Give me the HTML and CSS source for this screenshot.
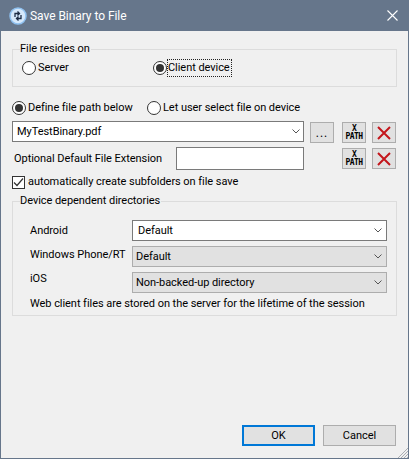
FILE: index.html
```html
<!DOCTYPE html>
<html lang="en">
<head>
  <meta charset="UTF-8">
  <meta name="viewport" content="width=device-width, initial-scale=1.0">
  <title>Save Binary to File</title>
  <link rel="stylesheet" href="styles.css">
</head>
<body>
  <div class="dialog">
    <div class="titlebar">
      <svg class="app-icon" width="18" height="18" viewBox="0 0 18 18">
        <circle cx="9" cy="9" r="8" fill="#d5e8fb" stroke="#8fc1f0" stroke-width="1.5"/>
        <path d="M6 10V6.500h4M8.500 4.500l2 2-2 2M12 8v3.500H8M9.500 13.500l-2-2 2-2" fill="none" stroke="#1d2c44" stroke-width="1.3"/>
      </svg>
      <span class="title">Save Binary to File</span>
      <svg class="close" width="11" height="11" viewBox="0 0 11 11">
        <path d="M.5.500l10 10M10.500.500l-10 10" stroke="#fff" stroke-width="1.1"/>
      </svg>
    </div>

    <div class="content">
      <fieldset class="group group-location">
        <legend>File resides on</legend>
        <div class="location-row">
          <div class="radio-item item-server"><span class="radio"></span>Server</div>
          <div class="radio-item"><span class="radio checked"></span><span class="focused">Client device</span></div>
        </div>
      </fieldset>

      <div class="path-mode">
        <div class="radio-item item-define"><span class="radio checked"></span>Define file path below</div>
        <div class="radio-item"><span class="radio"></span>Let user select file on device</div>
      </div>

      <div class="row row-path">
        <div class="field combo">
          <span>MyTestBinary.pdf</span>
          <svg class="chevron" width="8" height="5" viewBox="0 0 8 5"><path d="M.5.500L4 4 7.500.500" fill="none" stroke="#555"/></svg>
        </div>
        <div class="tool-btn dots">...</div>
        <div class="tool-btn xpath"><span>X</span><span>PATH</span></div>
        <div class="tool-btn del">
          <svg width="14" height="14" viewBox="0 0 14 14"><path d="M1 1l12 12M13 1L1 13" stroke="#c4161c" stroke-width="2"/></svg>
        </div>
      </div>

      <div class="row row-ext">
        <span class="ext-label">Optional Default File Extension</span>
        <div class="field ext-input"></div>
        <div class="tool-btn xpath"><span>X</span><span>PATH</span></div>
        <div class="tool-btn del">
          <svg width="14" height="14" viewBox="0 0 14 14"><path d="M1 1l12 12M13 1L1 13" stroke="#c4161c" stroke-width="2"/></svg>
        </div>
      </div>

      <div class="check-row">
        <span class="checkbox">
          <svg width="11" height="9" viewBox="0 0 11 9"><path d="M1 4.500l3 3 6-7" fill="none" stroke="#333" stroke-width="1.200"/></svg>
        </span>
        automatically create subfolders on file save
      </div>

      <fieldset class="group group-device">
        <legend>Device dependent directories</legend>
        <div class="device-body">
          <div class="device-row">
            <span class="device-label label-android">Android</span>
            <div class="select active">
              <span>Default</span>
              <svg class="chevron" width="8" height="5" viewBox="0 0 8 5"><path d="M.5.500L4 4 7.500.500" fill="none" stroke="#555"/></svg>
            </div>
          </div>
          <div class="device-row">
            <span class="device-label label-windows">Windows Phone/RT</span>
            <div class="select">
              <span>Default</span>
              <svg class="chevron" width="8" height="5" viewBox="0 0 8 5"><path d="M.5.500L4 4 7.500.500" fill="none" stroke="#555"/></svg>
            </div>
          </div>
          <div class="device-row">
            <span class="device-label label-ios">iOS</span>
            <div class="select">
              <span>Non-backed-up directory</span>
              <svg class="chevron" width="8" height="5" viewBox="0 0 8 5"><path d="M.5.500L4 4 7.500.500" fill="none" stroke="#555"/></svg>
            </div>
          </div>
          <p class="note">Web client files are stored on the server for the lifetime of the session</p>
        </div>
      </fieldset>

      <div class="actions">
        <button class="btn default">OK</button>
        <button class="btn">Cancel</button>
      </div>
      <svg class="grip" width="11" height="11" viewBox="0 0 11 11">
        <path d="M11 1L1 11M11 4L4 11M11 7L7 11M11 10l-1 1" stroke="#a9adb2" stroke-width="1"/>
      </svg>
    </div>
  </div>
</body>
</html>
```

FILE: styles.css
```css
* {
  box-sizing: border-box;
}

body {
  margin: 0;
  font-family: Roboto, "Noto Sans", sans-serif;
  font-size: 11px;
  line-height: 16px;
  letter-spacing: -0.05px;
  color: #000;
  background-color: #f0f0f0;
  white-space: nowrap;
}

.dialog {
  width: 409px;
  height: 459px;
  display: flex;
  flex-direction: column;
  border: 1px solid #66768b;
  border-top: 0;
}

.titlebar {
  height: 31px;
  flex: none;
  margin: 0 -1px;
  padding: 0 11px 0 9px;
  display: flex;
  align-items: center;
  background-color: #66768b;
  color: white;
}

.app-icon {
  margin-right: 3px;
}

.title {
  flex: 1;
  font-size: 12px;
}

.content {
  flex: 1;
  position: relative;
  padding: 10px 11px 0 11px;
  display: flex;
  flex-direction: column;
}

.group {
  margin: 0;
  padding: 0;
  min-width: 0;
  border: 1px solid #dcdcdc;
}

.group legend {
  margin-left: 7px;
  padding: 0 1px 0 0;
}

.group-location {
  height: 46px;
}

.location-row {
  display: flex;
  padding: 3px 0 0 9px;
}

.radio-item {
  display: flex;
  align-items: center;
}

.item-server {
  width: 131px;
}

.item-define {
  width: 135px;
}

.radio {
  width: 14px;
  height: 14px;
  margin-right: 2px;
  flex: none;
  border: 1px solid #333;
  border-radius: 50%;
  background-color: white;
  display: flex;
  align-items: center;
  justify-content: center;
}

.radio.checked::after {
  content: "";
  width: 8px;
  height: 8px;
  border-radius: 50%;
  background-color: #333;
}

.focused {
  margin-left: -1px;
  padding: 0 1px 0 0;
  outline: 1px dotted #222;
}

.path-mode {
  display: flex;
  margin-top: 13px;
}

.row {
  display: flex;
  align-items: center;
}

.row-path {
  margin-top: 5px;
  align-items: flex-start;
}

.row-ext {
  margin-top: 4px;
}

.field {
  background-color: white;
  border: 1px solid #7a7a7a;
}

.combo {
  width: 292px;
  height: 21px;
  padding: 0 3px 0 4px;
  display: flex;
  align-items: center;
  justify-content: space-between;
}

.ext-label {
  width: 162px;
  margin-left: 2px;
  flex: none;
}

.ext-input {
  width: 128px;
  height: 23px;
}

.tool-btn {
  width: 24px;
  height: 21px;
  flex: none;
  background-color: #e1e1e1;
  border: 1px solid #adadad;
  display: flex;
  flex-direction: column;
  align-items: center;
  justify-content: center;
}

.row-path .tool-btn {
  margin-top: 1px;
}

.dots {
  margin-left: 6px;
  font-size: 12px;
  letter-spacing: 1px;
  line-height: 20px;
}

.xpath {
  margin-left: 8px;
  font-family: "DejaVu Sans Mono", monospace;
  font-size: 8px;
  font-weight: bold;
  line-height: 8px;
  letter-spacing: -0.6px;
}

.row-ext .xpath {
  margin-left: 38px;
}

.del {
  margin-left: 6px;
}

.check-row {
  display: flex;
  align-items: center;
  gap: 3px;
  margin-top: 4px;
}

.checkbox {
  width: 13px;
  height: 13px;
  border: 1px solid #333;
  background-color: white;
  display: flex;
  align-items: center;
  justify-content: center;
}

.group-device {
  height: 123px;
  margin-top: 3px;
}

.device-body {
  padding: 11px 9px 0 17px;
}

.device-row {
  display: flex;
  align-items: flex-start;
}

.device-row + .device-row {
  margin-top: 5px;
}

.device-label {
  width: 102px;
  flex: none;
}

.label-android {
  margin-top: 3px;
}

.label-windows {
  margin-top: 1px;
}

.label-ios {
  margin-top: -1px;
}

.select {
  width: 255px;
  height: 21px;
  padding: 0 4px 0 3px;
  background-color: #e1e1e1;
  border: 1px solid #adadad;
  display: flex;
  align-items: center;
  justify-content: space-between;
}

.select.active {
  padding-left: 5px;
  background-color: white;
  border-color: #7a7a7a;
}

.note {
  margin: 3px 0 0 0;
}

.actions {
  margin-top: auto;
  margin-bottom: 12px;
  padding-right: 1px;
  display: flex;
  justify-content: flex-end;
  gap: 8px;
}

.btn {
  width: 73px;
  height: 21px;
  padding: 0;
  font: inherit;
  color: inherit;
  background-color: #e1e1e1;
  border: 1px solid #adadad;
}

.btn.default {
  border: 2px solid #0078d7;
}

.grip {
  position: absolute;
  right: 0;
  bottom: 0;
}
```
